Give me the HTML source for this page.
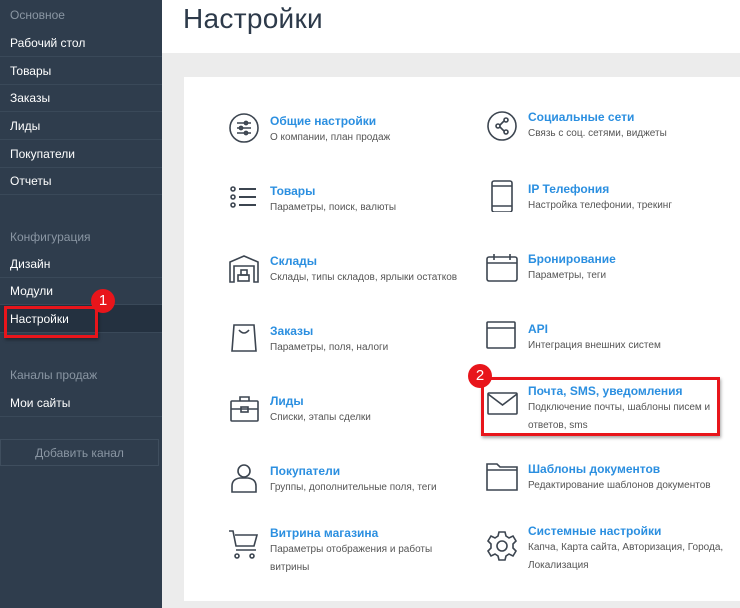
<!DOCTYPE html>
<html><head><meta charset="utf-8"><style>
*{margin:0;padding:0;box-sizing:border-box}
body{width:740px;height:608px;overflow:hidden;position:relative;background:#fff;font-family:"Liberation Sans","DejaVu Sans",sans-serif}
#sb{position:absolute;left:0;top:0;width:162px;height:608px;background:#2f3d4d}
.si{position:absolute;left:0;width:162px;height:28px;line-height:28px;padding-left:10px;color:#fff;font-size:12px;border-bottom:1px solid #3a4959}
.sh{position:absolute;left:10px;color:#8a96a3;font-size:12px}
#grey{position:absolute;left:162px;top:53px;width:578px;height:555px;background:#ececec}
#card{position:absolute;left:184px;top:77px;width:556px;height:524px;background:#fff}
h1{position:absolute;left:183px;top:3px;font-size:28px;font-weight:normal;color:#2d3a4a;letter-spacing:0.3px}
.it{position:absolute}
.it b{display:block;color:#2b8fe0;font-size:12px;font-weight:bold;line-height:16px}
.it span{display:block;color:#555;font-size:10px;line-height:18px}
svg.ic{position:absolute;width:32px;height:32px;fill:none;stroke:#3c4550;stroke-width:1.6}
.badge{position:absolute;width:24px;height:24px;border-radius:50%;background:#e8151b;color:#fff;font-size:15px;text-align:center;line-height:24px}
.box{position:absolute;border:3px solid #e8151b;box-shadow:1px 2px 3px rgba(0,0,0,.35)}
</style></head><body>
<div id="sb">
<div class="sh" style="top:8px">Основное</div>
<div class="si" style="top:29px">Рабочий стол</div>
<div class="si" style="top:57px">Товары</div>
<div class="si" style="top:84px">Заказы</div>
<div class="si" style="top:112px">Лиды</div>
<div class="si" style="top:140px">Покупатели</div>
<div class="si" style="top:167px">Отчеты</div>
<div class="sh" style="top:230px">Конфигурация</div>
<div class="si" style="top:250px">Дизайн</div>
<div class="si" style="top:277px">Модули</div>
<div class="si" style="top:305px;background:#243140">Настройки</div>
<div class="sh" style="top:368px">Каналы продаж</div>
<div class="si" style="top:389px">Мои сайты</div>
<div style="position:absolute;left:0;top:439px;width:159px;height:27px;border:1px solid #3f4e5e;color:#8a96a3;font-size:12px;text-align:center;line-height:26px">Добавить канал</div>
</div>
<div class="box" style="left:4px;top:306px;width:94px;height:32px"></div>
<div class="badge" style="left:91px;top:289px">1</div>
<h1>Настройки</h1>
<div id="grey"></div>
<div id="card"></div>

<svg class="ic" style="left:228px;top:112px" viewBox="0 0 32 32"><circle cx="16" cy="16" r="14"/><path d="M9 11h14M9 16h14M9 21h14"/><circle cx="18" cy="11" r="1.6"/><circle cx="13" cy="16" r="1.6"/><circle cx="18" cy="21" r="1.6"/></svg>
<div class="it" style="left:270px;top:113px"><b>Общие настройки</b><span>О компании, план продаж</span></div>

<svg class="ic" style="left:228px;top:183px" viewBox="0 0 32 32"><circle cx="5" cy="6" r="2"/><circle cx="5" cy="14" r="2"/><circle cx="5" cy="22" r="2"/><path d="M11 6h17M11 14h17M11 22h17" stroke-width="2"/></svg>
<div class="it" style="left:270px;top:183px"><b>Товары</b><span>Параметры, поиск, валюты</span></div>

<svg class="ic" style="left:228px;top:253px" viewBox="0 0 32 32"><path d="M2 29V9L16 3l14 6v20h-4V13H6v16z"/><rect x="10" y="22" width="11" height="6"/><rect x="13" y="17" width="6" height="5"/></svg>
<div class="it" style="left:270px;top:253px"><b>Склады</b><span>Склады, типы складов, ярлыки остатков</span></div>

<svg class="ic" style="left:228px;top:322px" viewBox="0 0 32 32"><path d="M6 3h20l2 26H4z"/><path d="M11 8q5 6 10 0"/></svg>
<div class="it" style="left:270px;top:323px"><b>Заказы</b><span>Параметры, поля, налоги</span></div>

<svg class="ic" style="left:228px;top:393px" viewBox="0 0 32 32"><rect x="3" y="8" width="27" height="20" rx="1"/><path d="M12 8V4h9v4M3 16h27"/><rect x="13" y="14" width="7" height="5"/></svg>
<div class="it" style="left:270px;top:393px"><b>Лиды</b><span>Списки, этапы сделки</span></div>

<svg class="ic" style="left:228px;top:462px" viewBox="0 0 32 32"><circle cx="16" cy="9" r="6"/><path d="M4 30v-6q0-7 8-8h8q8 1 8 8v6z"/></svg>
<div class="it" style="left:270px;top:463px"><b>Покупатели</b><span>Группы, дополнительные поля, теги</span></div>

<svg class="ic" style="left:228px;top:528px" viewBox="0 0 32 32"><path d="M1 3h4l3 15h18l3-11H7"/><path d="M8 22h20"/><circle cx="9" cy="28" r="2"/><circle cx="24" cy="28" r="2"/></svg>
<div class="it" style="left:270px;top:525px"><b>Витрина магазина</b><span>Параметры отображения и работы<br>витрины</span></div>

<svg class="ic" style="left:486px;top:110px" viewBox="0 0 32 32"><circle cx="16" cy="16" r="14"/><circle cx="20" cy="10" r="2"/><circle cx="12" cy="16" r="2"/><circle cx="20" cy="22" r="2"/><path d="M18 11l-4 4M14 17l4 4"/></svg>
<div class="it" style="left:528px;top:109px"><b>Социальные сети</b><span>Связь с соц. сетями, виджеты</span></div>

<svg class="ic" style="left:486px;top:180px" viewBox="0 0 32 32"><rect x="6" y="1" width="20" height="31" rx="2"/><path d="M6 6h20M6 26h20"/></svg>
<div class="it" style="left:528px;top:181px"><b>IP Телефония</b><span>Настройка телефонии, трекинг</span></div>

<svg class="ic" style="left:486px;top:252px" viewBox="0 0 32 32"><rect x="1" y="5" width="30" height="24" rx="2"/><path d="M1 11h30"/><path d="M8 2v6M24 2v6"/></svg>
<div class="it" style="left:528px;top:251px"><b>Бронирование</b><span>Параметры, теги</span></div>

<svg class="ic" style="left:486px;top:320px" viewBox="0 0 32 32"><rect x="1" y="2" width="28" height="26" rx="1"/><path d="M1 8h28"/></svg>
<div class="it" style="left:528px;top:321px"><b>API</b><span>Интеграция внешних систем</span></div>

<svg class="ic" style="left:487px;top:389px" viewBox="0 0 32 32"><rect x="1" y="4" width="29" height="21" rx="1"/><path d="M1 5l14.5 11L30 5"/></svg>
<div class="it" style="left:528px;top:383px"><b>Почта, SMS, уведомления</b><span>Подключение почты, шаблоны писем и<br>ответов, sms</span></div>
<div class="box" style="left:481px;top:377px;width:239px;height:59px"></div>
<div class="badge" style="left:468px;top:364px">2</div>

<svg class="ic" style="left:486px;top:461px" viewBox="0 0 32 32"><path d="M1 3h10l3 3h17v23H1z"/><path d="M1 9h30"/></svg>
<div class="it" style="left:528px;top:461px"><b>Шаблоны документов</b><span>Редактирование шаблонов документов</span></div>

<svg class="ic" style="left:486px;top:530px" viewBox="0 0 32 32"><circle cx="16" cy="16" r="5"/><path d="M13 2h6l1 4 3 2 4-2 3 5-3 3v4l3 3-3 5-4-2-3 2-1 4h-6l-1-4-3-2-4 2-3-5 3-3v-4L2 11l3-5 4 2 3-2z"/></svg>
<div class="it" style="left:528px;top:523px"><b>Системные настройки</b><span>Капча, Карта сайта, Авторизация, Города,<br>Локализация</span></div>
</body></html>
